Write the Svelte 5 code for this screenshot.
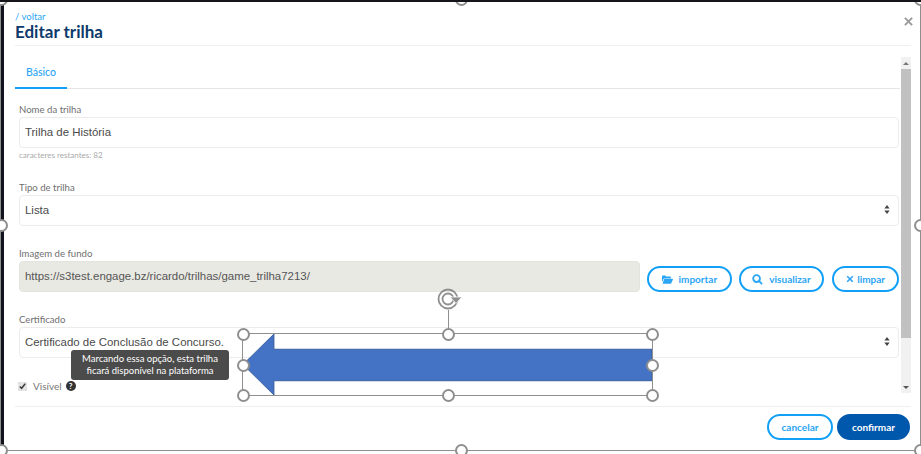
<script>
  let name = 'Trilha de História';
  let bg = 'https://s3test.engage.bz/ricardo/trilhas/game_trilha7213/';
  let visible = true;

  const handles = [
    [0, 0], [50, 0], [100, 0],
    [0, 50], [100, 50],
    [0, 100], [50, 100], [100, 100]
  ];
</script>

<div class="page">
  <div class="modal">
    <header>
      <a class="back" href="#top">/ voltar</a>
      <h1>Editar trilha</h1>
      <svg class="close" viewBox="0 0 10 10" width="9" height="9"><path d="M1 1l8 8M9 1l-8 8" /></svg>
    </header>

    <div class="main">
      <div class="content">
        <div class="tabs"><span class="tab">Básico</span></div>

        <div class="field first">
          <label for="nome">Nome da trilha</label>
          <input id="nome" class="ctl" bind:value={name} />
          <small>caracteres restantes: 82</small>
        </div>

        <div class="field type">
          <span class="lbl">Tipo de trilha</span>
          <div class="ctl select">
            <span>Lista</span>
            <svg viewBox="0 0 8 12" width="6" height="9"><path d="M4 0l3.5 4.6h-7zM4 12L.5 7.4h7z" /></svg>
          </div>
        </div>

        <div class="field image">
          <span class="lbl">Imagem de fundo</span>
          <div class="row">
            <input class="ctl readonly" value={bg} readonly />
            <button class="pill imp">
              <svg viewBox="0 0 16 12" width="11" height="9"><path d="M0 1.2C0 .5.5 0 1.2 0h3.6l1.4 1.600h5.600c.7 0 1.200.5 1.200 1.200V4H4.200C3.300 4 2.600 4.500 2.200 5.300L0 9.600zM3.300 5h12c.5 0 .8.500.6 1l-2.300 5.200c-.2.500-.7.800-1.200.800H.8z" /></svg>
              importar
            </button>
            <button class="pill vis">
              <svg viewBox="0 0 12 12" width="11" height="11"><circle cx="5" cy="5" r="3.700" fill="none" stroke-width="1.900" /><path d="M7.800 7.800l3.200 3.200" fill="none" stroke-width="2.200" /></svg>
              visualizar
            </button>
            <button class="pill lim">
              <svg viewBox="0 0 10 10" width="8" height="8"><path d="M1.500 1.500l7 7M8.500 1.500l-7 7" fill="none" stroke-width="2.400" /></svg>
              limpar
            </button>
          </div>
        </div>

        <div class="field cert">
          <span class="lbl">Certificado</span>
          <div class="ctl select">
            <span>Certificado de Conclusão de Concurso.</span>
            <svg viewBox="0 0 8 12" width="6" height="9"><path d="M4 0l3.500 4.600h-7zM4 12L.5 7.400h7z" /></svg>
          </div>
        </div>

        <div class="check">
          <input type="checkbox" bind:checked={visible} />
          <span>Visível</span>
          <span class="help">?</span>
        </div>
      </div>

      <div class="scrollbar">
        <span class="up"></span>
        <span class="thumb"></span>
        <span class="space"></span>
        <span class="down"></span>
      </div>
    </div>

    <footer>
      <button class="pill foot">cancelar</button>
      <button class="pill foot solid">confirmar</button>
    </footer>

    <div class="tip">Marcando essa opção, esta trilha<br />ficará disponível na plataforma</div>
  </div>

  <!-- selecao da imagem colada por cima -->
  <div class="frame outer">
    {#each handles as h}
      <i class="handle" style="left:{h[0]}%;top:{h[1]}%"></i>
    {/each}
  </div>

  <div class="frame shape">
    <svg class="arrow" viewBox="0 0 410 62" preserveAspectRatio="none">
      <path d="M0 31L31 0v15.500h379v32H31v14.500z" fill="#4472c4" stroke="#3a5f9f" stroke-width="1" />
    </svg>
    <span class="stem"></span>
    <svg class="rotate" viewBox="0 0 26 24" width="26" height="24">
      <circle cx="11" cy="12" r="9.500" fill="none" stroke="#8f8f8f" stroke-width="1.800" />
      <circle cx="11" cy="12" r="5.500" fill="none" stroke="#8f8f8f" stroke-width="1.800" />
      <path d="M13 10h12l-6 6.500z" fill="#8f8f8f" stroke="#fff" stroke-width=".8" />
    </svg>
    {#each handles as h}
      <i class="handle" style="left:{h[0]}%;top:{h[1]}%"></i>
    {/each}
  </div>
</div>

<style>
  :global(body) {
    margin: 0;
    background: #fff;
    overflow: hidden;
  }

  .page {
    position: relative;
    width: 921px;
    height: 454px;
    overflow: hidden;
    box-sizing: border-box;
    border-top: 2px solid #14161c;
    font-family: Lato, sans-serif;
    color: #555;
  }

  .modal {
    position: relative;
    height: 452px;
    box-sizing: border-box;
    border-left: 4px solid #10121c;
    padding: 0 10px 0 11px;
  }

  header {
    position: relative;
    height: 44px;
    box-sizing: border-box;
    padding-top: 9px;
    border-bottom: 1px solid #efefef;
  }

  .back {
    display: block;
    font-size: 9.500px;
    line-height: 11px;
    color: #2ba5f5;
    text-decoration: none;
  }

  h1 {
    margin: 0;
    font-size: 17px;
    line-height: 20px;
    font-weight: 700;
    color: #0e3a6b;
  }

  .close {
    position: absolute;
    top: 15px;
    right: -2px;
  }

  .close path {
    stroke: #9b9b9b;
    stroke-width: 2.200;
  }

  .main {
    display: flex;
    height: 360px;
  }

  .content {
    flex: 1;
    min-width: 0;
  }

  .tabs {
    margin-top: 10px;
    height: 32px;
    border-bottom: 1px solid #e6e6e6;
    margin-right: 1px;
  }

  .tab {
    display: block;
    box-sizing: border-box;
    width: 52px;
    height: 33px;
    padding-top: 10px;
    text-align: center;
    font-size: 10.500px;
    line-height: 13px;
    font-weight: 500;
    color: #2ba5f5;
    border-bottom: 2px solid #12a0f7;
  }

  .field {
    padding: 0 2px 0 4px;
  }

  .first {
    margin-top: 15px;
  }

  .type {
    margin-top: 21px;
  }

  .image {
    margin-top: 22px;
  }

  .cert {
    margin-top: 22px;
  }

  label,
  .lbl {
    display: block;
    font-size: 9.600px;
    line-height: 12px;
    color: #707070;
    margin-bottom: 1px;
  }

  .ctl {
    display: block;
    box-sizing: border-box;
    width: 100%;
    height: 31px;
    padding: 0 6px 2px 5px;
    border: 1px solid #ececec;
    border-radius: 4px;
    background: #fff;
    font-family: "Liberation Sans", Arial, sans-serif;
    font-size: 11.450px;
    color: #4a4a4a;
    outline: none;
  }

  small {
    display: block;
    margin-top: 2px;
    font-size: 8px;
    line-height: 11px;
    color: #aaa;
  }

  .select {
    display: flex;
    align-items: center;
    justify-content: space-between;
    padding-right: 8px;
  }

  .select svg path {
    fill: #444;
  }

  .row {
    display: flex;
    align-items: flex-start;
  }

  .readonly {
    flex: none;
    width: 621px;
    background: #e9e9e3;
    border-color: #e4e4de;
    color: #555;
  }

  .pill {
    box-sizing: border-box;
    display: inline-flex;
    align-items: center;
    justify-content: center;
    height: 26px;
    border: 2px solid #12a0f7;
    border-radius: 13px;
    background: #fff;
    padding: 0;
    font-family: Lato, sans-serif;
    font-size: 10px;
    font-weight: 700;
    color: #2ba5f5;
    margin-top: 5px;
  }

  .pill svg {
    fill: #2ba5f5;
    stroke: #2ba5f5;
    stroke-width: 0;
    margin-right: 6px;
  }

  .vis svg circle,
  .vis svg path,
  .lim svg path {
    stroke: #2ba5f5;
    stroke-width: 2;
  }

  .imp {
    width: 85px;
    margin-left: 7px;
  }

  .vis {
    width: 86px;
    margin-left: 7px;
  }

  .lim {
    width: 67px;
    margin-left: 8px;
  }

  .lim svg {
    margin-right: 3px;
  }

  .check {
    display: flex;
    align-items: center;
    margin: 21px 0 0 3px;
    height: 14px;
    font-size: 10px;
    color: #777;
  }

  .check input {
    width: 9px;
    height: 9px;
    margin: 0 6px 0 0;
    accent-color: #e4e4e4;
  }

  .help {
    display: inline-block;
    width: 10px;
    height: 10px;
    margin-left: 4px;
    border-radius: 50%;
    background: #333;
    color: #fff;
    font-size: 8px;
    line-height: 10px;
    font-weight: 700;
    text-align: center;
  }

  .scrollbar {
    flex: none;
    width: 10px;
    height: 336px;
    margin-top: 11px;
    display: flex;
    flex-direction: column;
    background: #f1f1f1;
  }

  .thumb {
    height: 269px;
    background: #c1c1c1;
  }

  .space {
    flex: 1;
  }

  .up,
  .down {
    display: block;
    height: 12px;
    position: relative;
  }

  .up::after,
  .down::after {
    content: '';
    position: absolute;
    left: 2px;
    border: 3px solid transparent;
  }

  .up::after {
    top: 2px;
    border-bottom: 3px solid #777;
  }

  .down::after {
    top: 5px;
    border-top: 3px solid #555;
  }

  footer {
    display: flex;
    justify-content: flex-end;
    gap: 4px;
    height: 45px;
    box-sizing: border-box;
    border-top: 1px solid #efefef;
    padding-top: 1px;
    padding-right: 1px;
  }

  .foot {
    width: 66px;
    height: 26px;
    margin-top: 6px;
  }

  .solid {
    width: 73px;
    background: #0058ad;
    border-color: #0058ad;
    color: #fff;
  }

  .tip {
    position: absolute;
    left: 67px;
    top: 348px;
    width: 158px;
    height: 30px;
    display: flex;
    align-items: center;
    justify-content: center;
    text-align: center;
    background: #4b4b4b;
    border-radius: 3px;
    color: #fff;
    font-size: 9.500px;
    line-height: 12px;
  }

  .frame {
    position: absolute;
    box-sizing: border-box;
    border: 1px solid #8f8f8f;
  }

  .outer {
    left: 0;
    top: -4px;
    width: 921px;
    height: 453px;
  }

  .shape {
    left: 242px;
    top: 331px;
    width: 411px;
    height: 63px;
  }

  .arrow {
    position: absolute;
    inset: 0;
    width: 100%;
    height: 100%;
  }

  .stem {
    position: absolute;
    left: 50%;
    top: -24px;
    height: 24px;
    width: 1px;
    background: #8f8f8f;
  }

  .rotate {
    position: absolute;
    left: 194px;
    top: -47px;
  }

  .handle {
    position: absolute;
    width: 9px;
    height: 9px;
    margin: -6px 0 0 -6px;
    border: 2px solid #8f8f8f;
    border-radius: 50%;
    background: #fff;
  }
</style>
